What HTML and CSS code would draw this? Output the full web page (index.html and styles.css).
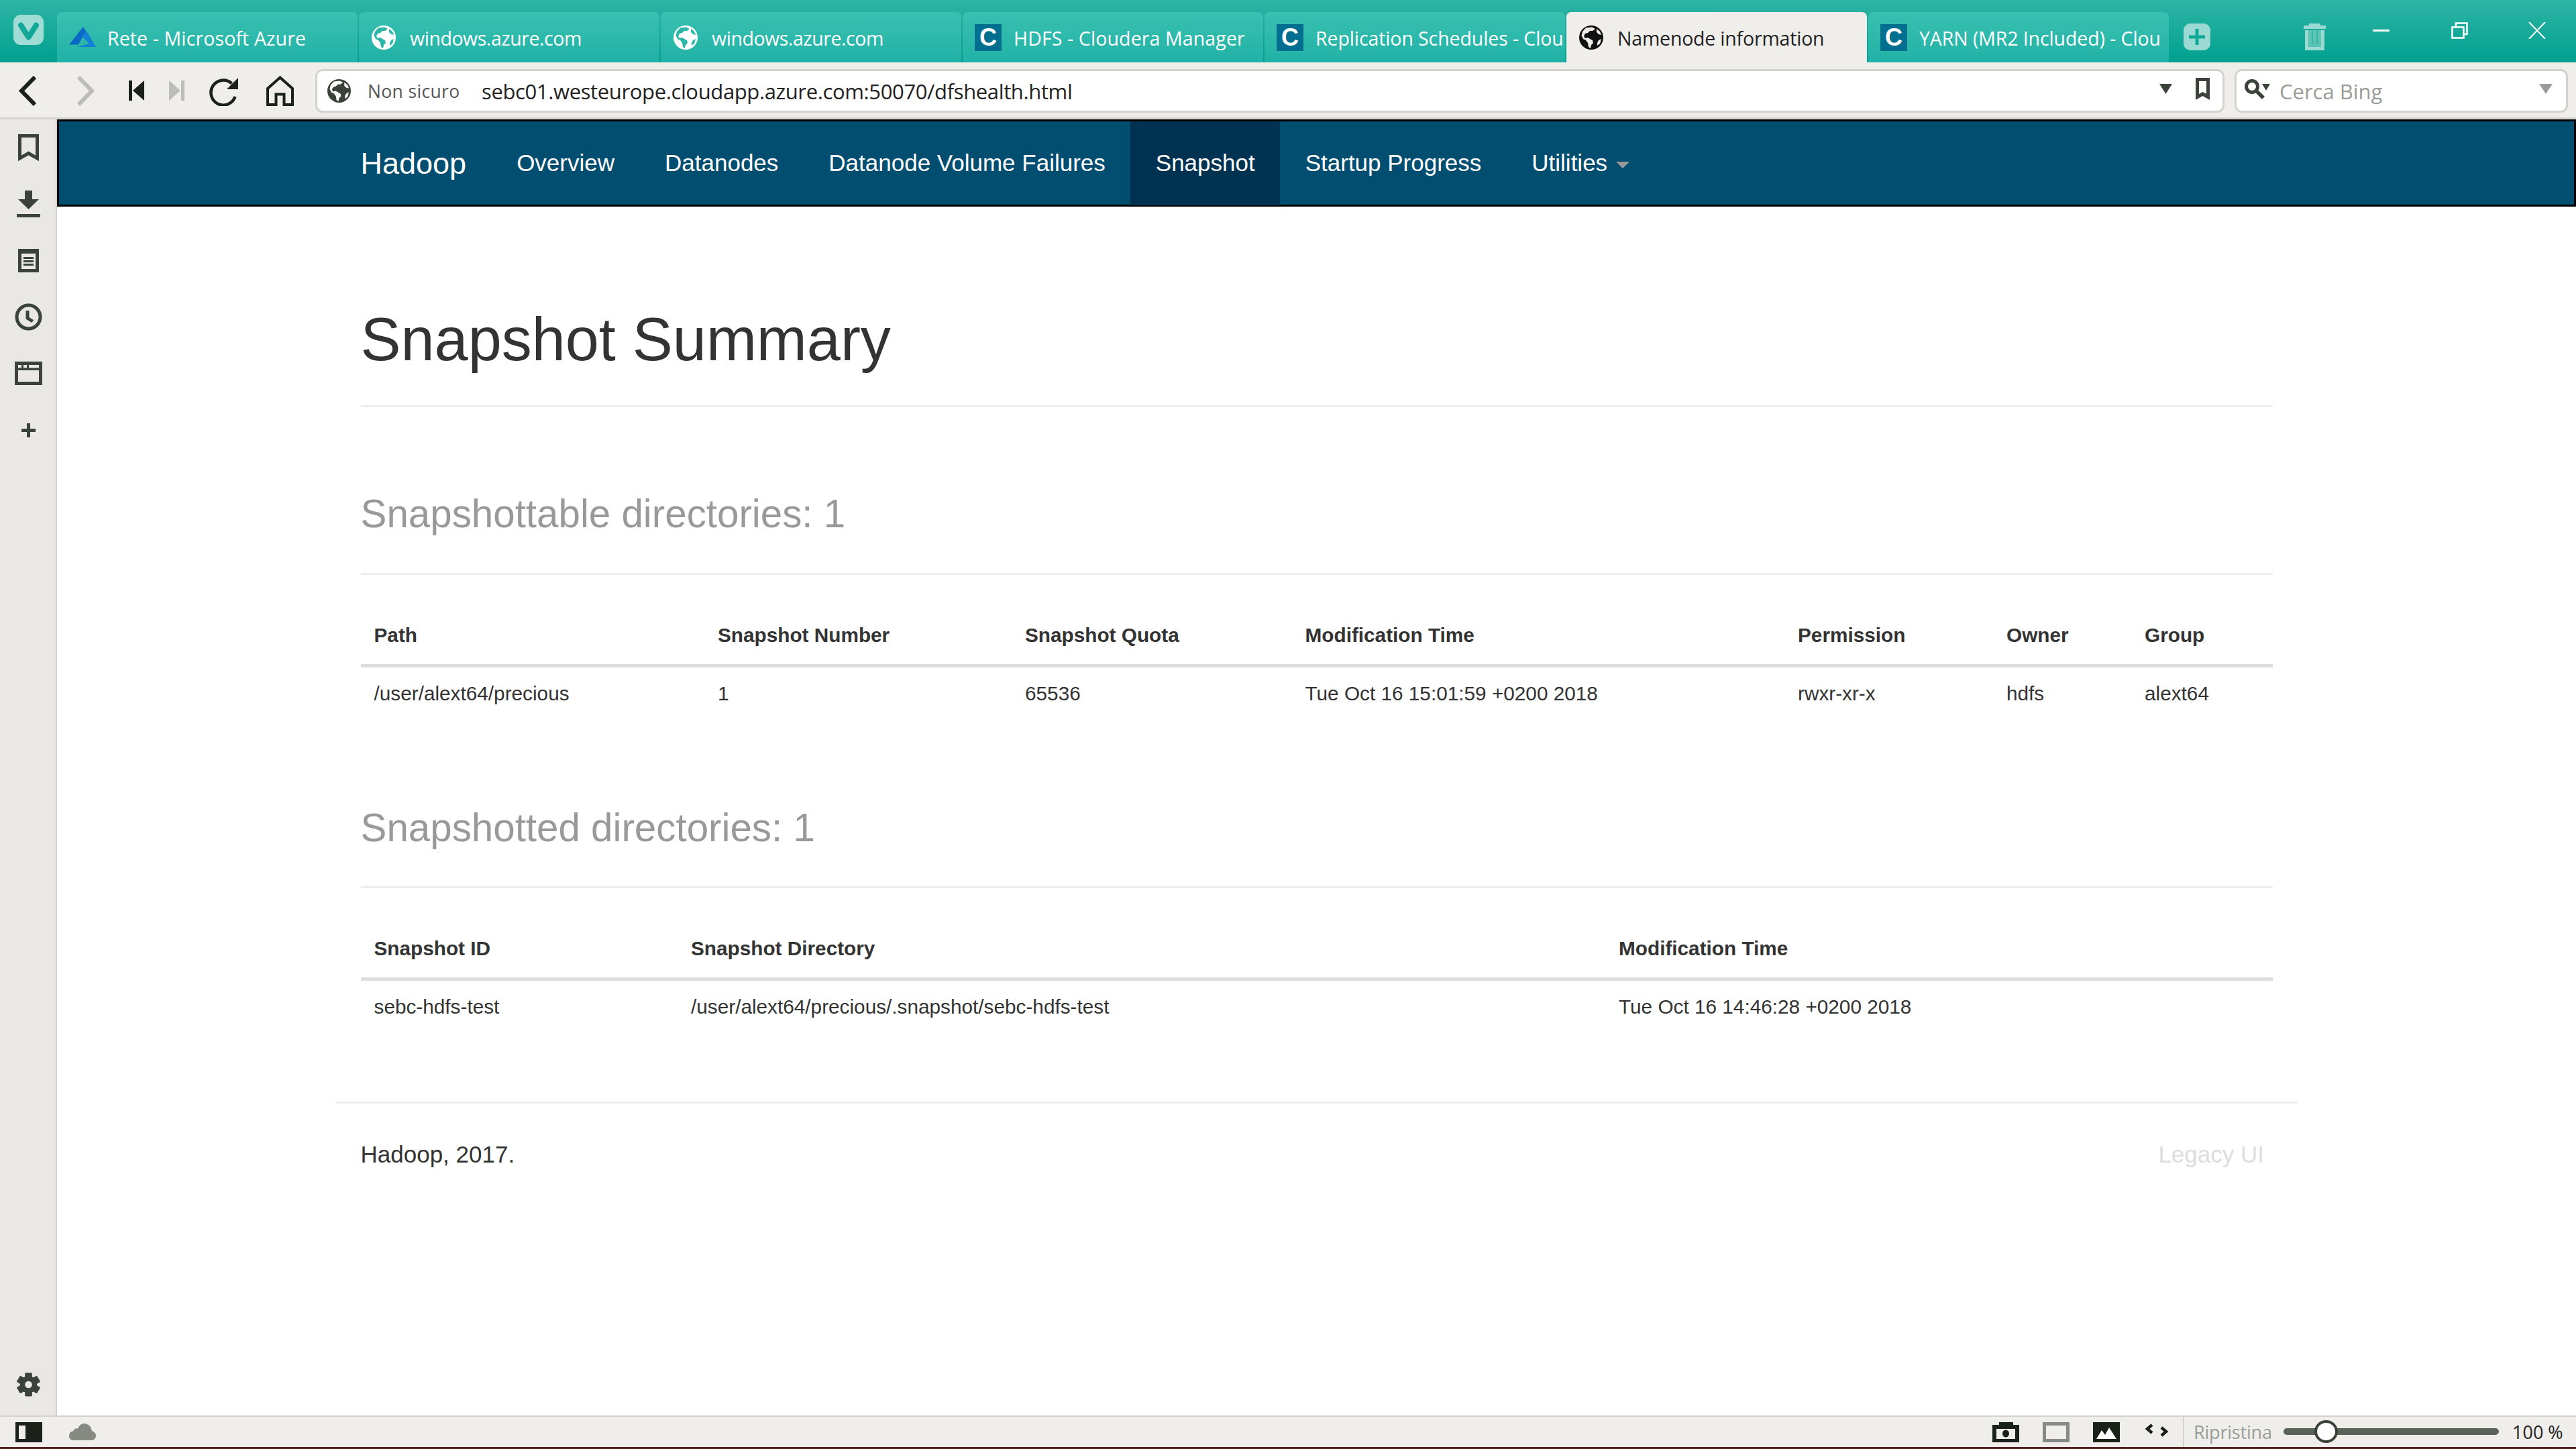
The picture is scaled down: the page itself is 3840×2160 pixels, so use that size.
FILE: index.html
```html
<!DOCTYPE html>
<html lang="it">
<head>
<meta charset="utf-8">
<title>Namenode information</title>
<link rel="stylesheet" href="styles.css">
</head>
<body>
<svg class="defs" width="0" height="0" aria-hidden="true">
  <symbol id="globe" viewBox="0 0 36 36">
    <circle class="sea" cx="18" cy="18" r="18"/>
    <path class="land" d="M10 3.5 L19 2.5 L24 5 L20 8 L16 8 L13 11 L9 12 L7 16 L9 19 L13 18 L16 20 L20 22 L21 26 L18 29 L17 34 L14 32 L13 26 L10 22 L6 20 L3.500 15 L5 9Z"/>
    <path class="land" d="M26 5 L31 9 L33 14 L29 13 L26 10Z"/>
    <path class="land" d="M29 22 L33 20 L31 27 L27 30 L27 26Z"/>
  </symbol>
  <symbol id="bm" viewBox="0 0 31 41">
    <path d="M2.500 2.500H28.500V36L15.500 28.500L2.500 36Z" fill="none" stroke="currentColor" stroke-width="5"/>
  </symbol>
</svg>

<div class="app">
  <header class="titlebar">
    <div class="logo-slot">
      <svg class="logo" width="45" height="45" viewBox="0 0 45 45"><rect width="45" height="45" rx="11" fill="#9fdcd4"/><path d="M11 15.500L22.500 33.500L34 15.500" fill="none" stroke="#12a797" stroke-width="8" stroke-linecap="round" stroke-linejoin="round"/></svg>
    </div>
    <nav class="tabs">
      <div class="tab">
        <svg class="fav fav-azure" width="40" height="33" viewBox="0 0 40 33"><path d="M21 1L0 27.500H14L25 7Z" fill="#0a68c4"/><path d="M26 7L40 31H12L30 26L19 15Z" fill="#1380d6"/></svg>
        <span class="tab-label label-wide">Rete - Microsoft Azure</span>
      </div>
      <div class="tab tab-globe">
        <span class="fav-box"><svg class="fav-globe" width="36" height="36"><use href="#globe"/></svg></span>
        <span class="tab-label">windows.azure.com</span>
      </div>
      <div class="tab tab-globe">
        <span class="fav-box"><svg class="fav-globe" width="36" height="36"><use href="#globe"/></svg></span>
        <span class="tab-label">windows.azure.com</span>
      </div>
      <div class="tab">
        <span class="fav-c">C</span>
        <span class="tab-label label-wide">HDFS - Cloudera Manager</span>
      </div>
      <div class="tab">
        <span class="fav-c">C</span>
        <span class="tab-label label-fit">Replication Schedules - Clou</span>
      </div>
      <div class="tab tab-active">
        <span class="fav-box"><svg class="fav-globe" width="36" height="36"><use href="#globe"/></svg></span>
        <span class="tab-label label-mid">Namenode information</span>
      </div>
      <div class="tab">
        <span class="fav-c">C</span>
        <span class="tab-label label-fit">YARN (MR2 Included) - Clou</span>
      </div>
    </nav>
    <svg class="newtab" width="40" height="40" viewBox="0 0 40 40"><rect width="40" height="40" rx="10" fill="#9bdad2"/><path d="M17.500 8h5v9.500H32v5h-9.500V32h-5v-9.500H8v-5h9.500Z" fill="#12a797"/></svg>
    <svg class="trash" width="33" height="41" viewBox="0 0 33 41"><path d="M8 0H25V3H33V8H0V3H8Z" fill="#9bdad2"/><path d="M2 10H31V40H2Z M7 10V35H26V10Z" fill="#9bdad2" fill-rule="evenodd"/><path d="M7 10H26V35H7Z" fill="#9bdad2" opacity=".55"/><path d="M12 10H14V30H12ZM19 10H21V30H19Z" fill="#12a797" opacity=".5"/></svg>
    <svg class="win-min" width="25" height="3" viewBox="0 0 25 3"><rect width="25" height="3" fill="#fff"/></svg>
    <svg class="win-max" width="25" height="25" viewBox="0 0 25 25"><path d="M1.500 7.500H18.500V23.500H1.500ZM7 7V1.500H23.500V18H19" fill="none" stroke="#fff" stroke-width="2.500"/></svg>
    <svg class="win-close" width="26" height="25" viewBox="0 0 26 25"><path d="M1 0L25 25M25 0L1 25" fill="none" stroke="#fff" stroke-width="2"/></svg>
  </header>

  <div class="toolbar">
    <svg class="tb-back" width="26" height="45" viewBox="0 0 26 45"><path d="M24 2L4 22.500L24 43" fill="none" stroke="#1a2118" stroke-width="6"/></svg>
    <svg class="tb-forward" width="26" height="45" viewBox="0 0 26 45"><path d="M2 2L22 22.500L2 43" fill="none" stroke="#bdbdb7" stroke-width="6"/></svg>
    <svg class="tb-rewind" width="23" height="30" viewBox="0 0 23 30"><path d="M0 0H5V30H0ZM23 0V30L6 15Z" fill="#1a2118"/></svg>
    <svg class="tb-ffwd" width="23" height="30" viewBox="0 0 23 30"><path d="M23 0H18V30H23ZM0 0V30L17 15Z" fill="#bdbdb7"/></svg>
    <svg class="tb-reload" width="43" height="43" viewBox="0 0 43 43"><path d="M33.500 9.500A18.500 18.500 0 1 0 38.500 29" fill="none" stroke="#1a2118" stroke-width="4.500"/><path d="M43 1V18H26Z" fill="#1a2118"/></svg>
    <svg class="tb-home" width="41" height="45" viewBox="0 0 41 45"><path d="M20.500 2.500L39 19V43H26.500V27.500H14.500V43H2V19Z" fill="none" stroke="#1a2118" stroke-width="4"/></svg>
    <div class="address">
      <svg class="addr-globe" width="35" height="35"><use href="#globe"/></svg>
      <span class="addr-note">Non sicuro</span>
      <span class="addr-url">sebc01.westeurope.cloudapp.azure.com:50070/dfshealth.html</span>
      <svg class="addr-drop" width="19" height="15" viewBox="0 0 19 15"><path d="M0 0H19L9.500 15Z" fill="#3a4239"/></svg>
      <svg class="addr-bm" width="21" height="33" viewBox="0 0 21 33"><path d="M0 0H21V33L10.500 27L0 33Z M5 5V24L10.500 21L16 24V5Z" fill="#3a4239" fill-rule="evenodd"/></svg>
    </div>
    <div class="search">
      <svg class="search-ico" width="41" height="30" viewBox="0 0 41 30"><circle cx="13" cy="11" r="8.500" fill="none" stroke="#3a4239" stroke-width="5"/><path d="M19 17L30 28" stroke="#3a4239" stroke-width="5.500"/><path d="M28 7H40L34 17Z" fill="#3a4239"/></svg>
      <span class="search-text">Cerca Bing</span>
      <svg class="search-drop" width="20" height="15" viewBox="0 0 20 15"><path d="M0 0H20L10 15Z" fill="#9a9c97"/></svg>
    </div>
  </div>

  <div class="workspace">
    <aside class="sidebar">
      <div class="side-item"><svg class="side-ico" width="31" height="41"><use href="#bm"/></svg></div>
      <div class="side-item"><svg class="side-ico" width="35" height="40" viewBox="0 0 35 40"><path d="M12 0H23V13H33L17.500 28L2 13H12ZM0 35H35V40H0Z" fill="currentColor"/></svg></div>
      <div class="side-item"><svg class="side-ico" width="31" height="35" viewBox="0 0 31 35"><path d="M0 0H31V35H0ZM5 7V30H26V7ZM8 12H23V15H8ZM8 17H23V20H8ZM8 22H23V25H8Z" fill="currentColor" fill-rule="evenodd"/></svg></div>
      <div class="side-item"><svg class="side-ico" width="41" height="41" viewBox="0 0 41 41"><circle cx="20.500" cy="20.500" r="17.500" fill="none" stroke="currentColor" stroke-width="5"/><path d="M16.500 11h5v10l6.500 4-2.500 4-9-5.500Z" fill="currentColor"/></svg></div>
      <div class="side-item"><svg class="side-ico" width="41" height="35" viewBox="0 0 41 35"><path d="M0 0H41V35H0ZM5 13V30H36V13ZM5 5V9.500H10V5ZM13 5V9.500H18V5ZM21 5V9.500H36V5Z" fill="currentColor" fill-rule="evenodd"/></svg></div>
      <div class="side-item"><svg class="side-ico" width="21" height="21" viewBox="0 0 21 21"><path d="M8 0H13V8H21V13H13V21H8V13H0V8H8Z" fill="currentColor"/></svg></div>
      <div class="side-item side-gear">
        <svg class="side-ico" width="35" height="36" viewBox="-18 -18 36 36">
          <g fill="currentColor">
            <rect x="-5.500" y="-18" width="11" height="36" rx="1.500"/>
            <rect x="-5.500" y="-18" width="11" height="36" rx="1.500" transform="rotate(60)"/>
            <rect x="-5.500" y="-18" width="11" height="36" rx="1.500" transform="rotate(120)"/>
            <circle r="13"/>
          </g>
          <circle r="5.500" fill="#e9e8e4"/>
        </svg>
      </div>
    </aside>

    <main class="viewport">
      <nav class="navbar">
        <div class="nav-inner">
          <a class="brand">Hadoop</a>
          <a class="nav-link">Overview</a>
          <a class="nav-link">Datanodes</a>
          <a class="nav-link">Datanode Volume Failures</a>
          <a class="nav-link nav-active">Snapshot</a>
          <a class="nav-link">Startup Progress</a>
          <a class="nav-link">Utilities<span class="caret"></span></a>
        </div>
      </nav>
      <div class="container">
        <div class="page-header"><h1>Snapshot Summary</h1></div>

        <div class="section-header"><h3>Snapshottable directories: 1</h3></div>
        <table class="data">
          <colgroup><col class="c-path"><col class="c-num"><col class="c-quota"><col class="c-mod"><col class="c-perm"><col class="c-owner"><col class="c-group"></colgroup>
          <thead><tr><th>Path</th><th>Snapshot Number</th><th>Snapshot Quota</th><th>Modification Time</th><th>Permission</th><th>Owner</th><th>Group</th></tr></thead>
          <tbody><tr><td>/user/alext64/precious</td><td>1</td><td>65536</td><td>Tue Oct 16 15:01:59 +0200 2018</td><td>rwxr-xr-x</td><td>hdfs</td><td>alext64</td></tr></tbody>
        </table>

        <div class="section-header section-second"><h3>Snapshotted directories: 1</h3></div>
        <table class="data">
          <colgroup><col class="c-id"><col class="c-dir"><col class="c-time"></colgroup>
          <thead><tr><th>Snapshot ID</th><th>Snapshot Directory</th><th>Modification Time</th></tr></thead>
          <tbody><tr><td>sebc-hdfs-test</td><td>/user/alext64/precious/.snapshot/sebc-hdfs-test</td><td>Tue Oct 16 14:46:28 +0200 2018</td></tr></tbody>
        </table>

        <footer class="footer">
          <span class="footer-left">Hadoop, 2017.</span>
          <a class="footer-right">Legacy UI</a>
        </footer>
      </div>
    </main>
  </div>

  <div class="statusbar">
    <svg class="st-panel" width="40" height="30" viewBox="0 0 40 30"><path d="M0 0H40V30H0ZM5 5V25H15V5Z" fill="#1a2118" fill-rule="evenodd"/></svg>
    <svg class="st-cloud" width="40" height="25" viewBox="0 0 40 25"><path d="M7 25C2 25 0 22 0 18.500C0 14 3 11.500 6 11.500C7 8.500 10 6.500 13 7.500C15 3 18 0 23 0C28 0 33 4 34 11C38 12.500 40 15 40 18.500C40 22 37 25 33 25Z" fill="#868a82"/></svg>
    <span class="st-spacer"></span>
    <svg class="st-camera" width="40" height="30" viewBox="0 0 40 30"><path d="M0 4H10V0H31V4H40V30H0ZM6 10V25H34V10Z" fill="#1a2118" fill-rule="evenodd"/><ellipse cx="20" cy="17" rx="5" ry="5.500" fill="#1a2118"/></svg>
    <svg class="st-square" width="40" height="30" viewBox="0 0 40 30"><rect x="2.500" y="2.500" width="35" height="25" fill="none" stroke="#868a82" stroke-width="5"/></svg>
    <svg class="st-image" width="40" height="30" viewBox="0 0 40 30"><path d="M0 0H40V30H0Z" fill="#1a2118"/><path d="M5 25L13 12L18 19L24 8L35 25Z" fill="#fff"/></svg>
    <svg class="st-code" width="36" height="20" viewBox="0 0 36 20"><path d="M11 2L4 8L11 14M25 6L32 12L25 18" fill="none" stroke="#1a2118" stroke-width="4.500"/></svg>
    <span class="st-divider"></span>
    <span class="st-reset">Ripristina</span>
    <div class="st-track"><span class="st-thumb"></span></div>
    <span class="st-zoom">100 %</span>
  </div>
</div>
</body>
</html>
```

FILE: styles.css
```css
* { box-sizing: border-box; }
html, body { margin: 0; padding: 0; height: 100%; overflow: hidden; }
body { font-family: "Liberation Sans", Arial, sans-serif; color: #333; background: #fff; }
.defs { position: absolute; }
svg { display: block; flex: none; }

.app { display: flex; flex-direction: column; height: 2160px; border-bottom: 3px solid #532020; }

/* title bar */
.titlebar {
  flex: none; height: 93px; display: flex; align-items: flex-start;
  background: linear-gradient(#2db4a5, #01a08f);
  font-family: "Open Sans", sans-serif;
}
.logo-slot { width: 85px; height: 93px; padding: 22px 0 0 20px; flex: none; }
.tabs { display: flex; gap: 2px; margin-top: 18px; flex: none; }
.tab {
  width: 448px; height: 75px; display: flex; align-items: center; padding: 0 2px 0 18px; gap: 18px;
  border-radius: 7px 7px 0 0; overflow: hidden; color: #fff;
  background: linear-gradient(#39c0b1, #21b2a5);
}
.tab-label { font-size: 28.500px; letter-spacing: -.45px; white-space: nowrap; overflow: hidden; flex: 1; padding-top: 2px; }
.label-wide { letter-spacing: .12px; }
.label-mid { letter-spacing: -.2px; }
.label-fit { letter-spacing: -.1px; }
.fav-azure { margin-right: -1px; }
.fav-box { width: 40px; height: 40px; display: flex; align-items: center; justify-content: center; flex: none; }
.fav-globe { color: #fff; margin-left: -2px; }
.fav-c {
  width: 40px; height: 40px; flex: none; background: #006e8f; color: #fff; text-align: center;
  font: bold 36px/40px "Liberation Sans", sans-serif;
}
.sea { fill: currentColor; }
.land { fill: var(--land, #2ab7a8); }
.tab-active { background: #efeeea; color: #222; }
.tab-active .fav-globe { color: #111; --land: #efeeea; }
.newtab { margin: 35px 0 0 22px; }
.trash { margin: 35px 0 0 139px; }
.win-min { margin: 44px 0 0 70px; }
.win-max { margin: 33px 0 0 92px; }
.win-close { margin: 33px 0 0 90px; }

/* tool bar */
.toolbar {
  flex: none; height: 85px; display: flex; align-items: flex-start; background: #efeeea;
  border-bottom: 3px solid #d6d5d0; font-family: "Open Sans", sans-serif;
}
.tb-back { margin: 20px 0 0 28px; }
.tb-forward { margin: 20px 0 0 61px; }
.tb-rewind { margin: 27px 0 0 51px; }
.tb-ffwd { margin: 27px 0 0 37px; }
.tb-reload { margin: 22px 0 0 37px; }
.tb-home { margin: 20px 0 0 42px; }
.address, .search {
  height: 65px; margin-top: 10px; display: flex; align-items: center; background: #fff;
  border: 3px solid #d3d2cd; border-radius: 11px;
}
.address { width: 2846px; margin-left: 32px; padding: 0 19px 0 15px; }
.addr-globe { color: #3a4239; --land: #fff; }
.addr-note { font-size: 26.500px; letter-spacing: .35px; color: #555; margin-left: 25px; width: 170px; white-space: nowrap; }
.addr-url { font-size: 31px; letter-spacing: -.37px; color: #222; flex: 1; white-space: nowrap; }
.addr-drop { margin-top: -7px; }
.addr-bm { margin: -7px 0 0 35px; }
.search { width: 497px; margin-left: 15px; padding: 0 20px 0 10px; }
.search-ico { margin-top: -6px; }
.search-text { font-size: 31px; letter-spacing: 0; color: #999c97; margin-left: 13px; flex: 1; white-space: nowrap; }
.search-drop { margin-top: -7px; }

/* work area */
.workspace { flex: 1; min-height: 0; display: flex; }
.sidebar {
  width: 85px; flex: none; display: flex; flex-direction: column; background: #e9e8e4;
  border-right: 2px solid #d3d2cd; color: #3a4239; padding-left: 2px;
}
.side-item { height: 84.200px; display: flex; align-items: center; justify-content: center; flex: none; }
.side-gear { margin-top: auto; height: 66px; padding-bottom: 27px; }

.viewport { flex: 1; min-width: 0; background: #fff; }
.navbar { height: 130px; background: #024e70; border: 3px solid #000; }
.nav-inner { width: 2925px; margin: 0 auto; display: flex; height: 125px; }
.brand { padding: 0 37.500px; font-size: 45px; line-height: 125px; color: #fff; }
.nav-link { padding: 0 37.500px 2px; font-size: 35px; color: #fff; display: flex; align-items: center; }
.nav-active { background: #003352; }
.caret {
  width: 0; height: 0; margin-left: 13px; margin-top: 6px;
  border-top: 10px solid #999; border-left: 10.500px solid transparent; border-right: 10.500px solid transparent;
}

.container { width: 2925px; margin: 0 auto; padding: 0 37.500px; }
h1 { margin: 0; font-size: 90px; line-height: 99px; font-weight: 400; color: #333; }
h3 { margin: 0; font-size: 58.300px; line-height: 66px; font-weight: 400; color: #999; }
.page-header { margin-top: 149px; padding-bottom: 48px; border-bottom: 3px solid #eee; }
.section-header { margin-top: 126px; padding-bottom: 55px; border-bottom: 3px solid #eee; margin-bottom: 47px; }
.section-second { margin-top: 123.500px; padding-bottom: 54px; }

.data { width: 2850px; border-collapse: collapse; table-layout: fixed; font-size: 29.750px; color: #333; }
.data th, .data td { line-height: 43px; text-align: left; vertical-align: top; white-space: nowrap; }
.data td { padding: 17.500px 20px 22.500px; height: 83px; }
.data th { padding: 21px 20px 19px; font-weight: 700; border-bottom: 5px solid #ddd; height: 88px; }
.c-path { width: 512.500px; }
.c-num { width: 458px; }
.c-quota { width: 417.500px; }
.c-mod { width: 734.500px; }
.c-perm { width: 311px; }
.c-owner { width: 206px; }
.c-group { width: 210.500px; }
.c-id { width: 472.500px; }
.c-dir { width: 1383px; }
.c-time { width: 994.500px; }

.footer {
  margin: 97.500px -37.500px 0; padding: 51px 50px 0 37.500px; border-top: 3px solid #eee;
  display: flex; justify-content: space-between; font-size: 35px; line-height: 50px;
}
.footer-right { color: #ddd; }

/* status bar */
.statusbar {
  flex: none; height: 47px; display: flex; align-items: center; background: #efeeea;
  border-top: 2px solid #d3d2cd; font-family: "Open Sans", sans-serif;
}
.st-panel { margin-left: 23px; }
.st-cloud { margin-left: 40px; }
.st-spacer { flex: 1; }
.st-square { margin-left: 35px; }
.st-image { margin-left: 35px; }
.st-code { margin: -6px 0 0 37px; }
.st-divider { width: 2px; height: 45px; background: #d3d2cd; margin-left: 21px; }
.st-reset { font-size: 27px; letter-spacing: -.2px; color: #999c97; margin-left: 14px; width: 134px; white-space: nowrap; }
.st-track { width: 321px; height: 10px; border-radius: 5px; background: #5a6358; display: flex; align-items: center; margin-top: -2px; }
.st-thumb { width: 35px; height: 34px; margin-left: 46px; flex: none; border-radius: 50%; background: #fff; border: 4px solid #3a4239; }
.st-zoom { font-size: 27px; letter-spacing: 0; color: #222; margin: 0 18px 0 20px; white-space: nowrap; width: 77px; }
```
